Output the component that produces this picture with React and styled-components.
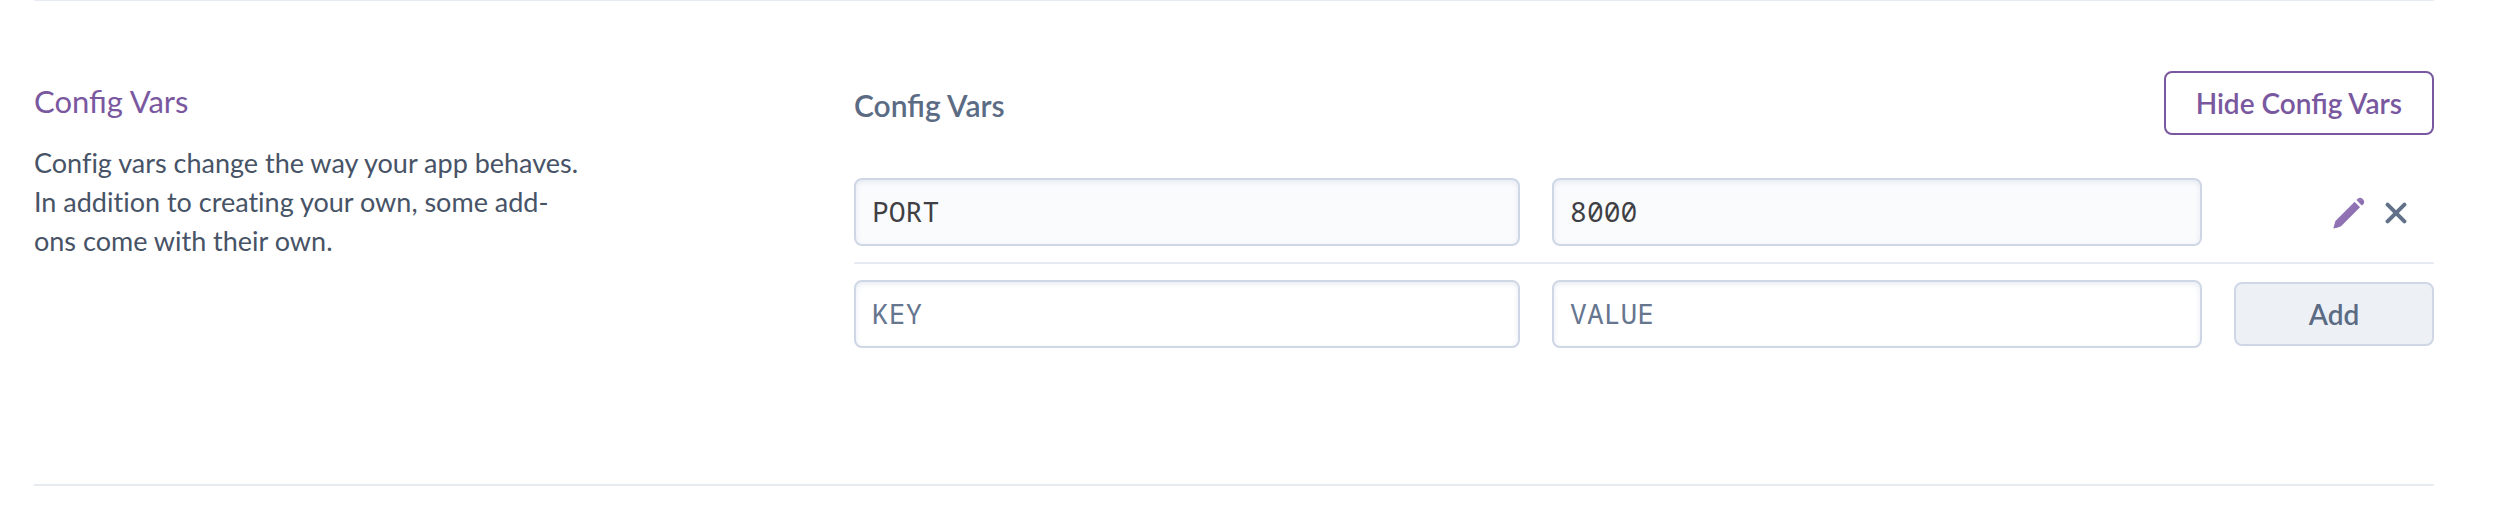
import React from 'react';
import styled, { createGlobalStyle } from 'styled-components';

const GlobalStyle = createGlobalStyle`
  *, *::before, *::after { box-sizing: border-box; }
  body {
    margin: 0;
    background: #fff;
    color: #475366;
    font-family: Lato, "Open Sans", sans-serif;
    font-size: 27px;
    line-height: 39px;
  }
`;

const Section = styled.section`
  display: grid;
  grid-template-columns: minmax(0, 38fr) minmax(0, 79fr);
  column-gap: 60px;
  margin: 0 71px 0 34px;
  padding: 70px 0 136px;
  border-top: 1px solid #e6eaf3;
  border-bottom: 2px solid #e6eaf1;
`;

const Intro = styled.div`
  padding: 8px 206px 0 0;
`;

const Title = styled.h2`
  margin: 0 0 20px;
  color: #79589f;
  font-size: 31px;
  font-weight: 400;
  line-height: 44px;
`;

const Description = styled.p`
  margin: 0;
  font-variant-ligatures: none;
`;

const Panel = styled.div`
  min-width: 0;
`;

const PanelHeader = styled.header`
  display: flex;
  align-items: center;
  justify-content: space-between;
  margin-bottom: 43px;
`;

const PanelTitle = styled.h3`
  margin: 4px 0 0;
  color: #5b6b84;
  font-size: 30px;
  font-weight: 600;
  line-height: 40px;
`;

const Button = styled.button`
  height: 64px;
  padding: 0 30px;
  border: 2px solid ${({ $primary }) => ($primary ? '#79589f' : '#cfd7e6')};
  border-radius: 8px;
  background: ${({ $primary }) => ($primary ? '#fff' : '#edf1f6')};
  color: ${({ $primary }) => ($primary ? '#79589f' : '#5b6b84')};
  font-family: inherit;
  font-size: 28px;
  font-weight: 600;
  line-height: 36px;
  cursor: pointer;
`;

const Row = styled.form`
  display: grid;
  grid-template-columns: minmax(0, 41fr) minmax(0, 40fr) 200px;
  column-gap: 32px;
  align-items: center;
  padding-bottom: 16px;

  & + & {
    padding-top: 16px;
    border-top: 2px solid #e6eaf3;
  }
  &:last-child { padding-bottom: 0; }
`;

const Field = styled.input`
  width: 100%;
  height: 68px;
  padding: 0 16px 2px;
  border: 2px solid #cfd7e6;
  border-radius: 8px;
  outline: none;
  background: ${({ readOnly }) => (readOnly ? '#fafbfd' : '#fff')};
  box-shadow: inset 0 2px 5px rgba(207, 215, 230, 0.5);
  color: #3f3f44;
  font-family: "Noto Sans Mono", "DejaVu Sans Mono", monospace;
  font-size: 28px;

  &::placeholder { color: #67768f; opacity: 1; }
`;

const Actions = styled.div`
  display: flex;
  align-items: center;
  justify-content: flex-end;
  gap: 20px;
  padding: 2px 27px 0 0;
`;

const IconButton = styled.button`
  display: flex;
  padding: 0;
  border: 0;
  background: none;
  cursor: pointer;
`;

function PencilIcon() {
  return (
    <svg width="32" height="32" viewBox="0 0 32 32" aria-hidden="true">
      <defs>
        <linearGradient id="pencil" x1="0" y1="0" x2="1" y2="1">
          <stop offset="0" stopColor="#9d80bf" />
          <stop offset="1" stopColor="#8264a8" />
        </linearGradient>
      </defs>
      <g fill="url(#pencil)">
        <path d="M0.3 31.5L2.4 24L21.6 4.8L27 10.3L8 29.2Q4 31.2 0.3 31.5Z" />
        <path d="M23.4 3L24.9 1.6Q27.3 -0.4 29.7 2Q32.3 4.6 30.4 7L28.8 8.6Z" />
      </g>
    </svg>
  );
}

function CrossIcon() {
  return (
    <svg width="22" height="22" viewBox="0 0 22 22" aria-hidden="true">
      <path d="M2.6 2.6L19.4 19.4M19.4 2.6L2.6 19.4" stroke="#627189" strokeWidth="4" strokeLinecap="round" />
    </svg>
  );
}

const configVars = [{ key: 'PORT', value: '8000' }];

export default function App() {
  return (
    <>
      <GlobalStyle />
      <Section>
        <Intro>
          <Title>Config Vars</Title>
          <Description>
            Config vars change the way your app behaves. In addition to creating your own, some add-ons come with their own.
          </Description>
        </Intro>
        <Panel>
          <PanelHeader>
            <PanelTitle>Config Vars</PanelTitle>
            <Button type="button" $primary>Hide Config Vars</Button>
          </PanelHeader>
          {configVars.map(({ key, value }) => (
            <Row key={key}>
              <Field aria-label="Config var key" defaultValue={key} readOnly />
              <Field aria-label="Config var value" defaultValue={value} readOnly />
              <Actions>
                <IconButton type="button" aria-label={`Edit ${key}`}><PencilIcon /></IconButton>
                <IconButton type="button" aria-label={`Remove ${key}`}><CrossIcon /></IconButton>
              </Actions>
            </Row>
          ))}
          <Row>
            <Field aria-label="New key" placeholder="KEY" />
            <Field aria-label="New value" placeholder="VALUE" />
            <Button type="button">Add</Button>
          </Row>
        </Panel>
      </Section>
    </>
  );
}
